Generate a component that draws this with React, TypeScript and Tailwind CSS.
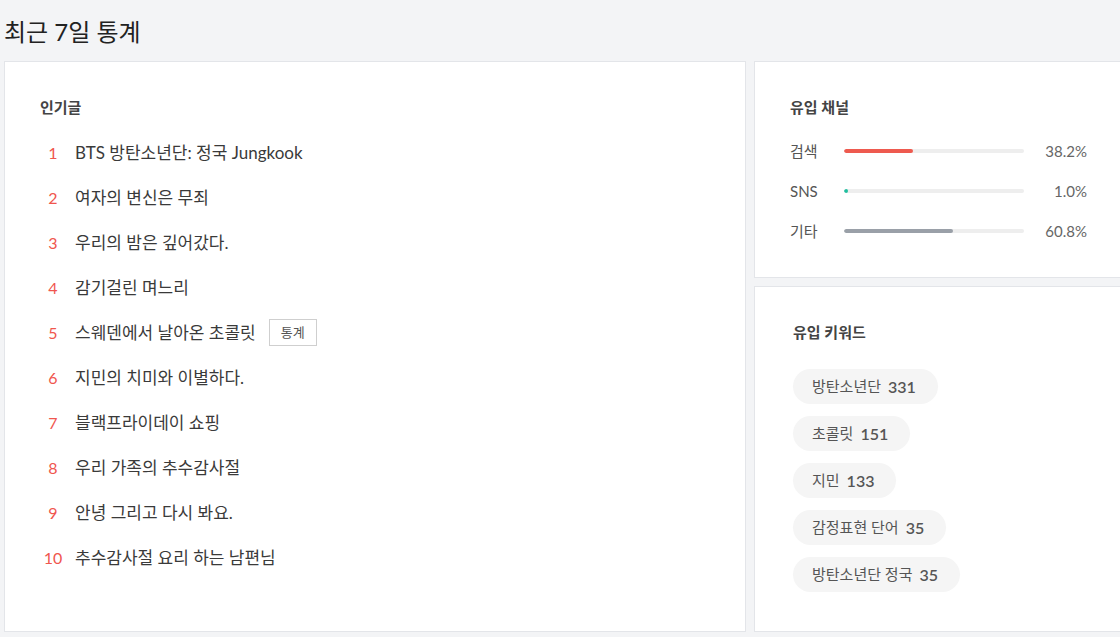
const popular = [
  "BTS 방탄소년단: 정국 Jungkook",
  "여자의 변신은 무죄",
  "우리의 밤은 깊어갔다.",
  "감기걸린 며느리",
  "스웨덴에서 날아온 초콜릿",
  "지민의 치미와 이별하다.",
  "블랙프라이데이 쇼핑",
  "우리 가족의 추수감사절",
  "안녕 그리고 다시 봐요.",
  "추수감사절 요리 하는 남편님",
]

const channels = [
  { label: "검색", value: 38.2, color: "bg-[#ee5a4f]" },
  { label: "SNS", value: 1.0, color: "bg-[#1fbf9f]" },
  { label: "기타", value: 60.8, color: "bg-[#9aa0a8]" },
]

const keywords = [
  { word: "방탄소년단", count: 331 },
  { word: "초콜릿", count: 151 },
  { word: "지민", count: 133 },
  { word: "감정표현 단어", count: 35 },
  { word: "방탄소년단 정국", count: 35 },
]

export default function App() {
  return (
    <div className="w-[1120px] h-[637px] overflow-hidden bg-[#f3f4f6] text-[#333] font-['Lato','Noto_Sans_CJK_KR',sans-serif]">
      <h1 className="h-[61px] flex items-center pl-[4px] pt-[3px] text-[24px] text-[#222]">최근 7일 통계</h1>

      <div className="flex gap-[8px] pl-[4px] w-[1140px]">
        {/* 인기글 */}
        <section className="w-[742px] h-[571px] shrink-0 bg-white border border-[#e3e5e9] pl-[35px] pt-[34px]">
          <h2 className="h-[22px] leading-[22px] text-[15px] font-semibold text-[#444]">인기글</h2>
          <ol className="mt-[12px]">
            {popular.map((title, i) => (
              <li key={i} className="h-[45px] flex items-center pl-[3px]">
                <span className="w-[20px] text-center text-[16px] text-[#f0564e]">{i + 1}</span>
                <span className="ml-[12px] text-[17px] text-[#3a3a3a]">{title}</span>
                {i === 4 && (
                  <span className="ml-[13px] h-[27px] px-[11px] flex items-center border border-[#cfcfcf] text-[13px] text-[#555]">
                    통계
                  </span>
                )}
              </li>
            ))}
          </ol>
        </section>

        <div className="w-[376px] shrink-0 flex flex-col gap-[8px]">
          {/* 유입 채널 */}
          <section className="h-[217px] bg-white border border-[#e3e5e9] pl-[35px] pt-[34px]">
            <h2 className="h-[22px] leading-[22px] text-[15px] font-semibold text-[#444]">유입 채널</h2>
            <div className="mt-[13px]">
              {channels.map((c) => (
                <div key={c.label} className="h-[40px] flex items-center">
                  <span className="w-[54px] text-[15px] text-[#555]">{c.label}</span>
                  <div className="w-[180px] h-[4px] rounded-full bg-[#eeeeee] overflow-hidden">
                    <div className={`h-full rounded-full ${c.color}`} style={{ width: `${Math.max(c.value, 2.2)}%` }} />
                  </div>
                  <span className="w-[63px] text-right text-[15px] text-[#666]">{c.value.toFixed(1)}%</span>
                </div>
              ))}
            </div>
          </section>

          {/* 유입 키워드 */}
          <section className="h-[346px] bg-white border border-[#e3e5e9] pl-[38px] pt-[34px]">
            <h2 className="h-[22px] leading-[22px] text-[15px] font-semibold text-[#444]">유입 키워드</h2>
            <div className="mt-[26px] flex flex-col items-start gap-[12px]">
              {keywords.map((k) => (
                <div key={k.word} className="h-[35px] flex items-center rounded-full bg-[#f5f5f5] pl-[19px] pr-[22px] text-[15px] text-[#555]">
                  <span>{k.word}</span>
                  <span className="ml-[7px] text-[16px] font-semibold text-[#555]">{k.count}</span>
                </div>
              ))}
            </div>
          </section>
        </div>
      </div>
    </div>
  )
}
